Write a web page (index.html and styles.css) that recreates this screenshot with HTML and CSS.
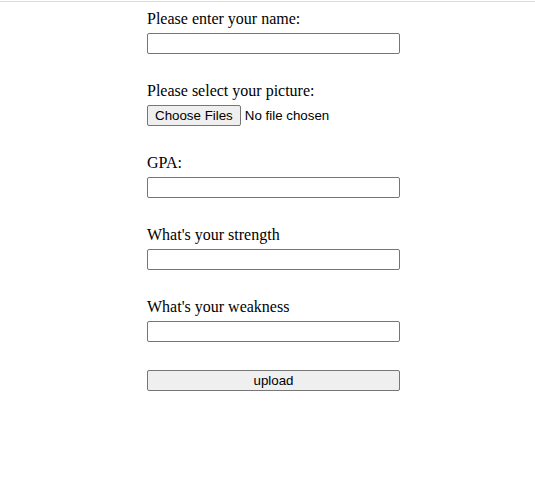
FILE: index.html
```html
<!DOCTYPE html>
<html lang="en">
<head>
<meta charset="utf-8">
<title>Upload</title>
<link rel="stylesheet" href="styles.css">
</head>
<body>
<form class="form">
  <div class="field">
    <label for="name">Please enter your name:</label>
    <input class="text" type="text" id="name">
  </div>
  <div class="field">
    <label for="picture">Please select your picture:</label>
    <input class="file" type="file" id="picture" multiple>
  </div>
  <div class="field">
    <label for="gpa">GPA:</label>
    <input class="text" type="text" id="gpa">
  </div>
  <div class="field">
    <label for="strength">What's your strength</label>
    <input class="text" type="text" id="strength">
  </div>
  <div class="field">
    <label for="weakness">What's your weakness</label>
    <input class="text" type="text" id="weakness">
  </div>
  <button class="submit" type="submit">upload</button>
</form>
</body>
</html>
```
FILE: styles.css
```css
* {
  box-sizing: border-box;
}

body {
  margin: 1px 0 0;
  padding: 8px 0 8px 12px;
  border-top: 1px solid #dadada;
  background: #fff;
  color: #000;
  font: 16px/18px "Liberation Serif", "Times New Roman", serif;
}

.form {
  display: flex;
  flex-direction: column;
  gap: 28px;
  max-width: 253px;
  margin: 0 auto;
}

.field {
  display: flex;
  flex-direction: column;
  gap: 5px;
}

.text,
.file,
.submit {
  width: 100%;
  height: 21px;
  font-family: "Liberation Sans", Arial, sans-serif;
}

.text {
  border: 1px solid #767676;
  border-radius: 2px;
  background: #fff;
}

.submit,
.file::file-selector-button {
  height: 21px;
  padding: 1px 7px;
  border: 1px solid #767676;
  border-radius: 2px;
  background: #efefef;
  color: #000;
  font-family: "Liberation Sans", Arial, sans-serif;
}

.file::file-selector-button {
  margin-right: 4px;
}
```
